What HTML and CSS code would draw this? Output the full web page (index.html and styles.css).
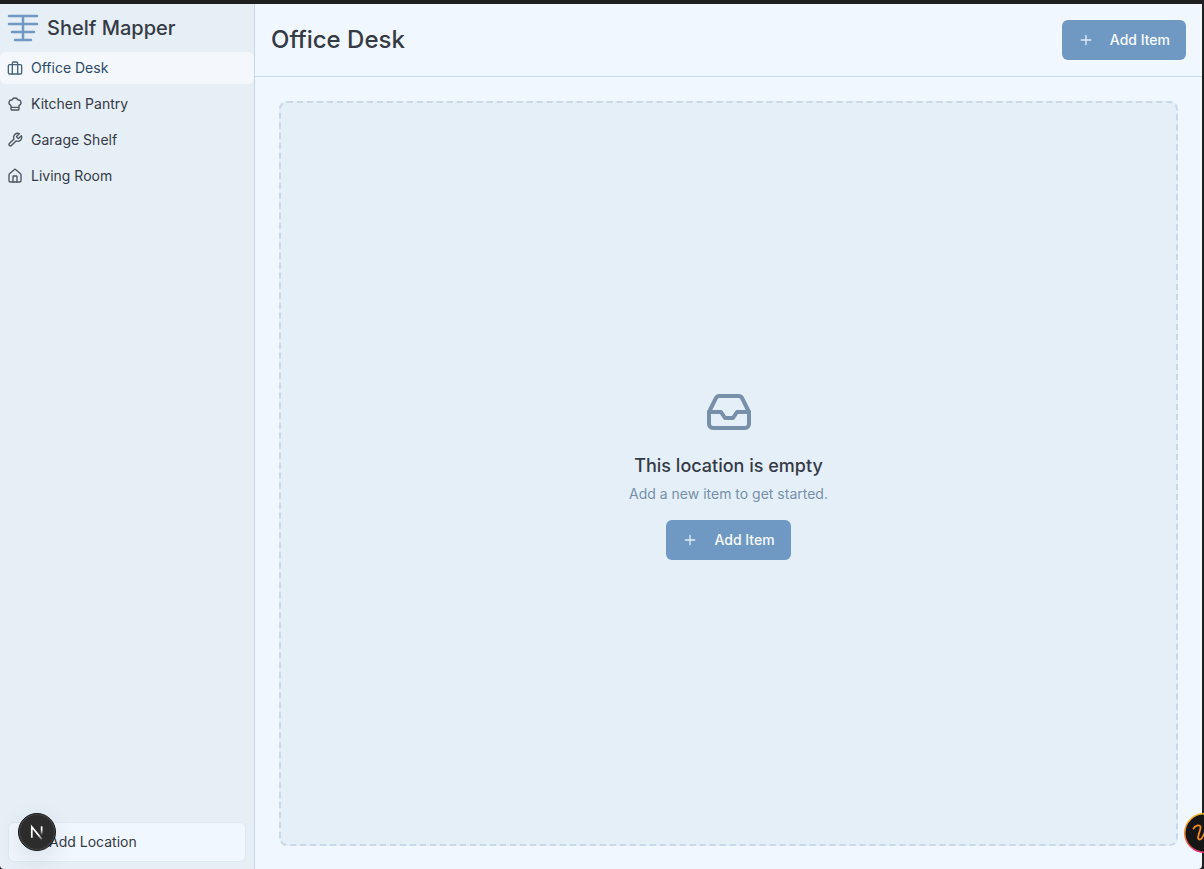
FILE: index.html
```html
<!DOCTYPE html>
<html lang="en">
<head>
<meta charset="utf-8">
<title>Shelf Mapper</title>
<link rel="stylesheet" href="styles.css">
</head>
<body>
<div class="app">
  <aside class="sidebar">
    <div class="brand">
      <svg class="brand-logo" viewBox="0 0 32 32" aria-hidden="true"><path d="M2 4h28M2 12h28M5 20h22M8 28h16M16 4v24"/></svg>
      <span class="brand-name">Shelf Mapper</span>
    </div>
    <nav class="locations">
      <a class="location active" href="#office">
        <svg class="icon" viewBox="0 0 24 24" aria-hidden="true"><path d="M8 21V5a2 2 0 0 1 2-2h4a2 2 0 0 1 2 2v16"/><rect x="2" y="7" width="20" height="14" rx="2"/></svg>
        Office Desk</a>
      <a class="location" href="#kitchen">
        <svg class="icon" viewBox="0 0 24 24" aria-hidden="true"><path d="M17 21a1 1 0 0 0 1-1v-5.35c0-.457.316-.844.727-1.041a4 4 0 0 0-2.134-7.589 5 5 0 0 0-9.186 0 4 4 0 0 0-2.134 7.588c.411.198.727.585.727 1.041V20a1 1 0 0 0 1 1ZM6 17h12"/></svg>
        Kitchen Pantry</a>
      <a class="location" href="#garage">
        <svg class="icon" viewBox="0 0 24 24" aria-hidden="true"><path d="M14.7 6.3a1 1 0 0 0 0 1.4l1.6 1.6a1 1 0 0 0 1.4 0l3.77-3.77a6 6 0 0 1-7.94 7.94l-6.91 6.91a2.12 2.12 0 0 1-3-3l6.91-6.91a6 6 0 0 1 7.94-7.94l-3.76 3.76z"/></svg>
        Garage Shelf</a>
      <a class="location" href="#living">
        <svg class="icon" viewBox="0 0 24 24" aria-hidden="true"><path d="M15 21v-8a1 1 0 0 0-1-1h-4a1 1 0 0 0-1 1v8"/><path d="M3 10a2 2 0 0 1 .709-1.528l7-5.999a2 2 0 0 1 2.582 0l7 5.999A2 2 0 0 1 21 10v9a2 2 0 0 1-2 2H5a2 2 0 0 1-2-2z"/></svg>
        Living Room</a>
    </nav>
    <button class="add-location" type="button">
      <svg class="icon" viewBox="0 0 24 24" aria-hidden="true"><path d="M5 12h14M12 5v14"/></svg>
      Add Location</button>
  </aside>
  <main class="main">
    <header class="header">
      <h1 class="title">Office Desk</h1>
      <button class="primary" type="button">
        <svg class="icon" viewBox="0 0 24 24" aria-hidden="true"><path d="M5 12h14M12 5v14"/></svg>
        Add Item</button>
    </header>
    <div class="content">
      <section class="empty">
        <svg class="inbox" viewBox="0 0 24 24" aria-hidden="true"><path d="M22 12h-6l-2 3h-4l-2-3H2"/><path d="M5.45 5.11 2 12v6a2 2 0 0 0 2 2h16a2 2 0 0 0 2-2v-6l-3.45-6.89A2 2 0 0 0 16.76 4H7.24a2 2 0 0 0-1.79 1.11z"/></svg>
        <h2 class="empty-title">This location is empty</h2>
        <p class="empty-text">Add a new item to get started.</p>
        <button class="primary" type="button">
          <svg class="icon" viewBox="0 0 24 24" aria-hidden="true"><path d="M5 12h14M12 5v14"/></svg>
          Add Item</button>
      </section>
    </div>
  </main>
</div>
<button class="dev-badge" type="button" aria-label="Developer tools">
  <svg viewBox="0 0 38 38" aria-hidden="true">
    <defs>
      <linearGradient id="stem" x1="0" y1="0" x2="0" y2="1"><stop offset=".4" stop-color="#fff"/><stop offset="1" stop-color="#fff" stop-opacity=".1"/></linearGradient>
      <linearGradient id="diagonal" gradientUnits="userSpaceOnUse" x1="14" y1="14" x2="25" y2="27"><stop offset=".6" stop-color="#fff"/><stop offset="1" stop-color="#fff" stop-opacity=".2"/></linearGradient>
    </defs>
    <path d="M13.500 25V13.500L24 26.500" fill="none" stroke="url(#diagonal)" stroke-width="1.8"/>
    <rect x="23" y="13" width="1.8" height="9" fill="url(#stem)"/>
  </svg>
</button>
<button class="assistant-badge" type="button" aria-label="Assistant">
  <svg viewBox="0 0 40 40" aria-hidden="true">
    <defs>
      <linearGradient id="ring" x1="0" y1="0" x2="0" y2="1"><stop offset="0" stop-color="#f5b81f"/><stop offset=".6" stop-color="#ef7a22"/><stop offset="1" stop-color="#f02c72"/></linearGradient>
    </defs>
    <circle cx="20" cy="20" r="19.2" fill="#161616" stroke="url(#ring)" stroke-width="1.5"/>
    <path d="M9.500 15.500C11 12.500 17 10.500 16.500 15C16 19 12 26 15.500 26.500C20 27 21 14 25 13C30 13 26 23 31 24" fill="none" stroke="#f58a1f" stroke-width="1.8" stroke-linecap="round"/>
  </svg>
</button>
</body>
</html>
```
FILE: styles.css
```css
* { box-sizing: border-box; }

body {
  margin: 0;
  background: #1f1f20;
  color: #353a45;
  font: 14px/20px Inter, sans-serif;
}

h1, h2, p { margin: 0; }

button { font: inherit; cursor: pointer; }

.app {
  display: flex;
  height: 100vh;
  border-top: 4px solid #1f1f20;
  border-right: 2px solid #1f1f20;
}

.icon {
  width: 16px;
  height: 16px;
  flex: none;
  fill: none;
  stroke: currentColor;
  stroke-width: 2;
  stroke-linecap: round;
  stroke-linejoin: round;
  opacity: 0.85;
}

.sidebar {
  display: flex;
  flex-direction: column;
  flex: 0 0 255px;
  background: #e6eef6;
  border-right: 1px solid #c6d9e9;
  border-bottom-left-radius: 4px;
}

.brand {
  display: flex;
  align-items: center;
  gap: 8px;
  height: 48px;
  padding: 0 7px;
}

.brand-logo {
  width: 32px;
  height: 32px;
  fill: none;
  stroke: #6f99c2;
  stroke-width: 2.5;
  stroke-linecap: round;
}

.brand-name {
  font-size: 20px;
  line-height: 28px;
  font-weight: 500;
}

.locations {
  display: flex;
  flex-direction: column;
  gap: 4px;
  flex: 1;
}

.location {
  display: flex;
  align-items: center;
  gap: 8px;
  height: 32px;
  padding: 0 7px;
  border-radius: 6px;
  color: inherit;
  text-decoration: none;
}

.location.active {
  background: #f4f8fd;
  color: #2c4a68;
}

.add-location {
  display: flex;
  align-items: center;
  gap: 8px;
  height: 40px;
  margin: 7px 8px;
  padding: 0 16px;
  border: 1px solid #dfe9f4;
  border-radius: 6px;
  background: #f0f7ff;
  color: inherit;
}

.main {
  display: flex;
  flex-direction: column;
  flex: 1;
  min-width: 0;
  background: #f0f7ff;
  border-bottom-right-radius: 4px;
}

.header {
  display: flex;
  align-items: center;
  justify-content: space-between;
  padding: 16px;
  border-bottom: 1px solid #c6d9e9;
}

.title {
  font-size: 24px;
  line-height: 32px;
  font-weight: 500;
}

.primary {
  display: flex;
  align-items: center;
  gap: 16px;
  height: 40px;
  padding: 0 16px;
  border: 0;
  border-radius: 6px;
  background: #6f99c2;
  color: #f8fbff;
  font-weight: 500;
}

.content {
  display: flex;
  flex: 1;
  padding: 24px 24px 23px;
}

.empty {
  display: flex;
  flex-direction: column;
  align-items: center;
  justify-content: center;
  flex: 1;
  border: 2px dashed #c8d8e7;
  border-radius: 8px;
  background: #e4eff8;
}

.inbox {
  width: 48px;
  height: 48px;
  margin-bottom: 16px;
  fill: none;
  stroke: #778fa8;
  stroke-width: 2;
  stroke-linecap: round;
  stroke-linejoin: round;
}

.empty-title {
  font-size: 18px;
  line-height: 28px;
  font-weight: 500;
}

.empty-text {
  margin: 4px 0 16px;
  color: #778fa8;
}

.dev-badge,
.assistant-badge {
  position: fixed;
  padding: 0;
  border-radius: 50%;
}

.dev-badge {
  left: 18px;
  bottom: 18px;
  width: 38px;
  height: 38px;
  border: 1px solid #151515;
  background: #2c2c2d;
  box-shadow: inset 0 0 0 1px #4b4b4c, 0 8px 24px #0000001a;
}

.assistant-badge {
  right: -20px;
  bottom: 16px;
  width: 40px;
  height: 40px;
  border: 0;
  background: none;
}

.dev-badge svg,
.assistant-badge svg {
  display: block;
  width: 100%;
  height: 100%;
}
```
